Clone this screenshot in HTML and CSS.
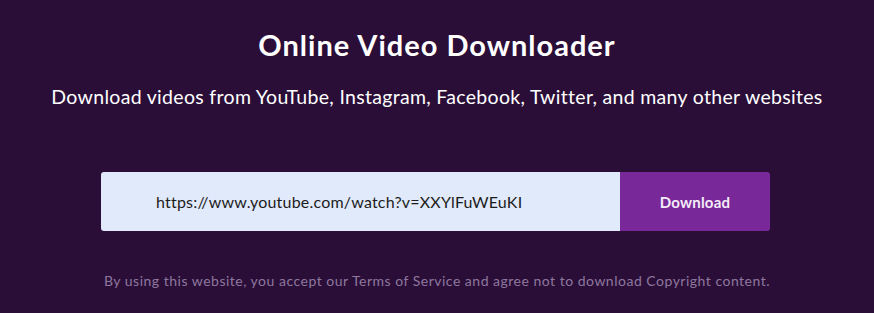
FILE: index.html
```html
<!DOCTYPE html>
<html lang="en">
<head>
<meta charset="utf-8">
<title>Online Video Downloader</title>
<link rel="stylesheet" href="styles.css">
</head>
<body>
<main class="hero">
  <h1 class="title">Online Video Downloader</h1>
  <p class="subtitle">Download videos from YouTube, Instagram, Facebook, Twitter, and many other websites</p>
  <form class="search">
    <input class="url" type="text" value="https://www.youtube.com/watch?v=XXYlFuWEuKI">
    <button class="btn" type="button">Download</button>
  </form>
  <p class="note">By using this website, you accept our Terms of Service and agree not to download Copyright content.</p>
</main>
</body>
</html>
```
FILE: styles.css
```css
html, body {
  margin: 0;
  padding: 0;
  background: #2a0e38;
  height: 100%;
}
body {
  font-family: Lato, "Open Sans", sans-serif;
  color: #fff;
}
.hero {
  display: flex;
  flex-direction: column;
  align-items: center;
  padding-top: 28px;
}
.title {
  margin: 0;
  font-size: 29px;
  font-weight: 700;
  line-height: 34px;
  letter-spacing: 1px;
}
.subtitle {
  margin: 23px 0 0;
  font-size: 19.5px;
  line-height: 24px;
  font-weight: 400;
  letter-spacing: 0.31px;
}
.search {
  display: flex;
  width: 669px;
  height: 59px;
  margin-top: 63px;
  margin-right: 3px;
  border-radius: 3px;
  overflow: hidden;
}
.url {
  flex: 1;
  border: none;
  outline: none;
  background: #e1eafa;
  padding: 0 0 0 55px;
  font-family: Lato, "Open Sans", sans-serif;
  font-size: 16px;
  letter-spacing: 0.2px;
  color: #1c1c1c;
}
.btn {
  width: 150px;
  border: none;
  background: #79289a;
  color: #f4ecf8;
  font-family: Lato, "Open Sans", sans-serif;
  font-size: 15px;
  font-weight: 700;
  letter-spacing: 0.2px;
}
.note {
  margin: 41px 0 0;
  font-size: 14px;
  line-height: 18px;
  letter-spacing: 0.5px;
  color: #8e789e;
}
```
